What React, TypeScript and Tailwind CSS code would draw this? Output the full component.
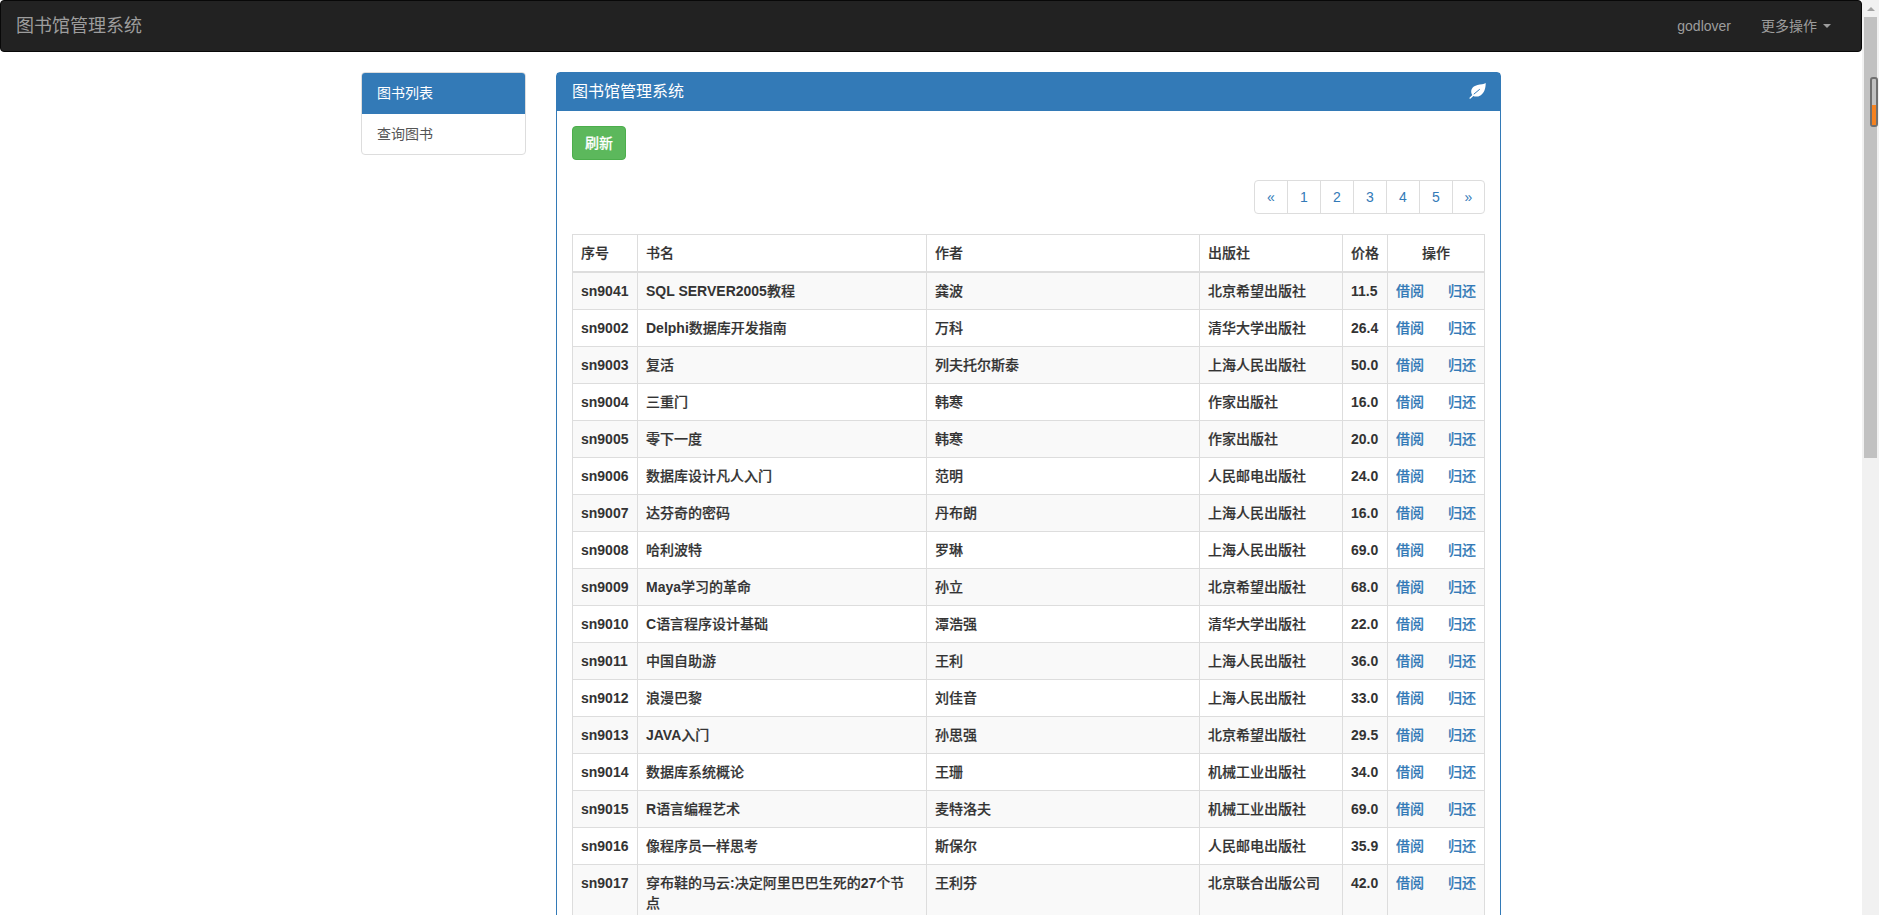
const books: [string, string, string, string, string][] = [
  ["sn9041", "SQL SERVER2005教程", "龚波", "北京希望出版社", "11.5"],
  ["sn9002", "Delphi数据库开发指南", "万科", "清华大学出版社", "26.4"],
  ["sn9003", "复活", "列夫托尔斯泰", "上海人民出版社", "50.0"],
  ["sn9004", "三重门", "韩寒", "作家出版社", "16.0"],
  ["sn9005", "零下一度", "韩寒", "作家出版社", "20.0"],
  ["sn9006", "数据库设计凡人入门", "范明", "人民邮电出版社", "24.0"],
  ["sn9007", "达芬奇的密码", "丹布朗", "上海人民出版社", "16.0"],
  ["sn9008", "哈利波特", "罗琳", "上海人民出版社", "69.0"],
  ["sn9009", "Maya学习的革命", "孙立", "北京希望出版社", "68.0"],
  ["sn9010", "C语言程序设计基础", "潭浩强", "清华大学出版社", "22.0"],
  ["sn9011", "中国自助游", "王利", "上海人民出版社", "36.0"],
  ["sn9012", "浪漫巴黎", "刘佳音", "上海人民出版社", "33.0"],
  ["sn9013", "JAVA入门", "孙思强", "北京希望出版社", "29.5"],
  ["sn9014", "数据库系统概论", "王珊", "机械工业出版社", "34.0"],
  ["sn9015", "R语言编程艺术", "麦特洛夫", "机械工业出版社", "69.0"],
  ["sn9016", "像程序员一样思考", "斯保尔", "人民邮电出版社", "35.9"],
  ["sn9017", "穿布鞋的马云:决定阿里巴巴生死的27个节\n点", "王利芬", "北京联合出版公司", "42.0"],
];

const cell = "border border-[#ddd] p-2 align-top leading-5 font-bold text-left whitespace-pre-line";
const head = "border border-[#ddd] border-b-2 p-2 align-bottom leading-5 font-bold whitespace-nowrap";
const cjk = "font-medium [-webkit-text-stroke:0.2px]";

function Mixed({ text }: { text: string }) {
  return (
    <>
      {text.split(/([\u4e00-\u9fff]+)/).map((part, i) =>
        /[\u4e00-\u9fff]/.test(part) ? (
          <span key={i} className={cjk}>{part}</span>
        ) : (
          <span key={i}>{part}</span>
        )
      )}
    </>
  );
}

function Leaf() {
  return (
    <svg width="17" height="16" viewBox="0 0 17 16" className="-mt-0.5 block">
      <path
        d="M16.7 0C15 1.2 11.5 1.3 8.5 2C4.8 2.9 2.3 5.2 2.2 8.3C2.1 9.9 2.6 11 3.3 11.9L0.3 15L1 16L4.4 13C6.2 13.9 9 13.8 11.4 12.4C15.2 10.2 16.7 5.5 16.7 0Z"
        fill="#fff"
      />
      <path d="M4.8 11.2L10.8 6.2" stroke="#337ab7" strokeWidth="1" fill="none" />
    </svg>
  );
}

export default function App() {
  return (
    <div className="flex h-screen overflow-hidden bg-white text-[14px] leading-5 text-[#333] font-['Liberation_Sans','Noto_Sans_CJK_SC',sans-serif]">
      <div className="flex-1 min-w-0 overflow-hidden">
        <nav className="flex h-[52px] items-center justify-between rounded border border-[#080808] bg-[#222] pl-[15px] pr-[30px] text-[#9d9d9d]">
          <span className="text-[18px] leading-5">图书馆管理系统</span>
          <div className="flex items-center">
            <span className="px-[15px]">godlover</span>
            <span className="flex items-center pl-[15px]">
              更多操作
              <span className="ml-[6px] h-0 w-0 border-x-4 border-t-4 border-x-transparent border-t-[#9d9d9d]" />
            </span>
          </div>
        </nav>

        <div className="mx-auto mt-5 flex w-[1170px] items-start">
          <aside className="w-[195px] shrink-0 px-[15px]">
            <div className="overflow-hidden rounded border border-[#ddd]">
              <div className="-mx-px -mt-px flex h-[42px] items-center bg-[#337ab7] pl-4 text-white">图书列表</div>
              <div className="px-[15px] py-[10px] text-[#555]">查询图书</div>
            </div>
          </aside>

          <main className="w-[975px] shrink-0 px-[15px]">
            <div className="rounded border border-[#337ab7]">
              <div className="flex h-[38px] items-center justify-between bg-[#337ab7] pl-[15px] pr-[14px] text-white">
                <span className="text-[16px]">图书馆管理系统</span>
                <Leaf />
              </div>
              <div className="p-[15px]">
                <button className="block h-[34px] w-[54px] rounded border border-[#4cae4c] bg-[#5cb85c] text-center font-medium text-white [-webkit-text-stroke:0.2px]">
                  刷新
                </button>
                <div className="my-5 flex justify-end">
                  <div className="flex overflow-hidden rounded border border-[#ddd] text-[#337ab7]">
                    {["«", "1", "2", "3", "4", "5", "»"].map((p, i) => (
                      <span
                        key={p}
                        className={
                          i === 0
                            ? "flex h-8 w-[32px] items-center justify-center"
                            : i === 6
                              ? "flex h-8 w-[32px] items-center justify-center border-l border-[#ddd]"
                              : "flex h-8 w-[33px] items-center justify-center border-l border-[#ddd]"
                        }
                      >
                        {p}
                      </span>
                    ))}
                  </div>
                </div>
                <table className="w-[912px] table-fixed border-collapse">
                  <colgroup>
                    <col className="w-[65px]" />
                    <col className="w-[289px]" />
                    <col className="w-[273px]" />
                    <col className="w-[143px]" />
                    <col className="w-[45px]" />
                    <col className="w-[97px]" />
                  </colgroup>
                  <thead>
                    <tr>
                      <th className={head + " text-left"}><Mixed text="序号" /></th>
                      <th className={head + " text-left"}><Mixed text="书名" /></th>
                      <th className={head + " text-left"}><Mixed text="作者" /></th>
                      <th className={head + " text-left"}><Mixed text="出版社" /></th>
                      <th className={head + " text-left"}><Mixed text="价格" /></th>
                      <th className={head + " text-center"}><Mixed text="操作" /></th>
                    </tr>
                  </thead>
                  <tbody>
                    {books.map((b, i) => (
                      <tr key={b[0]} className={i % 2 === 0 ? "bg-[#f9f9f9]" : "bg-white"}>
                        {b.map((v, j) => (
                          <td key={j} className={cell}><Mixed text={v} /></td>
                        ))}
                        <td className={cell}>
                          <div className="flex justify-between text-[#337ab7]">
                            <span className={cjk}>借阅</span>
                            <span className={cjk}>归还</span>
                          </div>
                        </td>
                      </tr>
                    ))}
                  </tbody>
                </table>
              </div>
            </div>
          </main>
        </div>
      </div>

      <div className="relative flex w-[17px] shrink-0 flex-col items-center bg-[#f1f1f1]">
        <div className="flex h-[17px] items-center justify-center">
          <span className="h-0 w-0 border-x-[4px] border-b-[4px] border-x-transparent border-b-[#a3a3a3]" />
        </div>
        <div className="h-[441px] w-[13px] bg-[#c1c1c1]" />
        <div className="absolute right-px top-[77px] h-[50px] w-2 rounded-[3px] border-2 border-[#6f6f6f] bg-[#c1c1c1]">
          <div className="absolute inset-x-0 bottom-0 h-5 bg-[#f58220]" />
        </div>
      </div>
    </div>
  );
}
